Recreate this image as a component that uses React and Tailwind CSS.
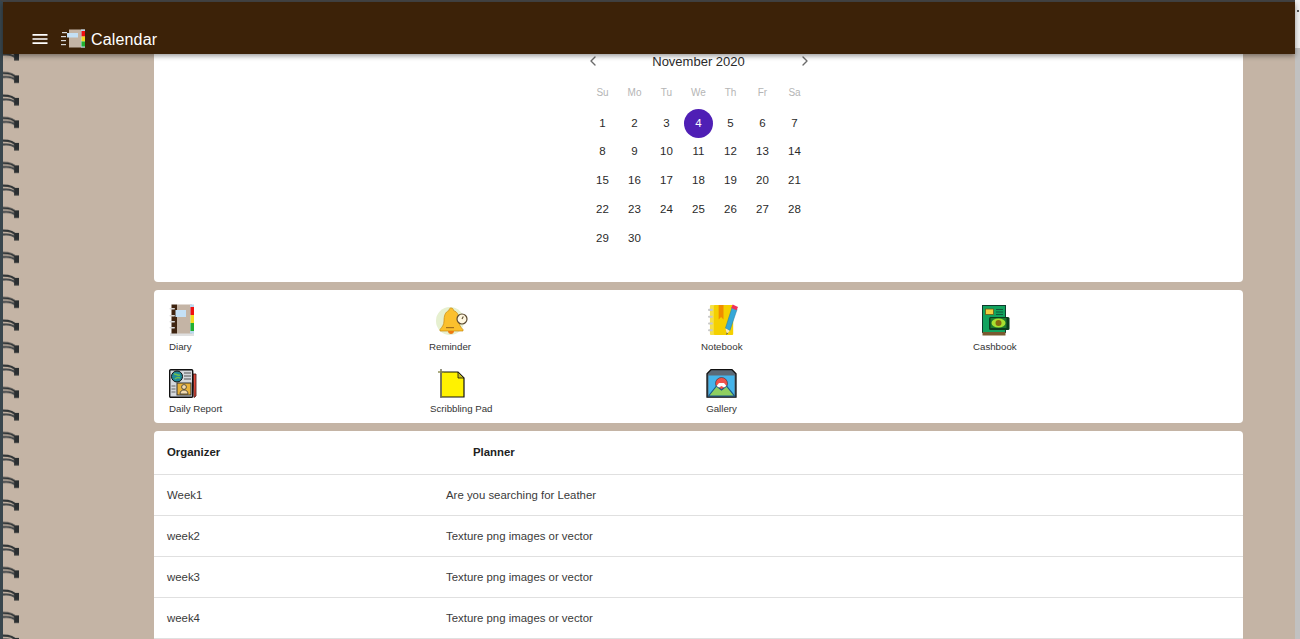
import { ChevronLeft, ChevronRight } from "lucide-react";

const DiaryIcon = ({ className }) => (
  <svg viewBox="0 0 26 32" className={className}>
    <rect x="1" y="29" width="24" height="3" fill="#000" opacity="0.12" />
    <rect x="2.500" y="0.500" width="5.500" height="29" fill="#3f2410" />
    <rect x="8" y="0.500" width="15" height="29" fill="#c4b4a5" />
    <rect x="21" y="0.500" width="4" height="29" fill="#b9d8ee" />
    <rect x="21.500" y="3" width="3.500" height="8" fill="#f01010" />
    <rect x="21.500" y="11" width="3.500" height="8" fill="#f4dc20" />
    <rect x="21.500" y="19" width="3.500" height="8" fill="#22b030" />
    <rect x="6.500" y="6" width="10.500" height="7" fill="#c4e0f6" />
    {[4, 11, 17, 23].map((y) => (
      <rect key={y} x="0.500" y={y} width="5.500" height="1.600" rx="0.800" fill="#d8d8d8" />
    ))}
  </svg>
);

const ReminderIcon = ({ className }) => (
  <svg viewBox="0 0 32 30" className={className}>
    <circle cx="14" cy="15" r="14" fill="#e6f0d0" />
    <path d="M15 2c1.500 0 2.500 1 2.500 2.500C22 6 23 10 23 15c0 4 1.500 6 4 8.500v1.500H4v-1.500C6 21 8 19 8 15c0-5 1-9 5-10.500C13 3 13.800 2 15 2z" fill="#fbc02d" stroke="#c98a10" strokeWidth="0.700" />
    <path d="M12 25h6c0 2-1.300 3-3 3s-3-1-3-3z" fill="#ef7a10" />
    <rect x="10" y="21" width="8" height="1.200" fill="#a3701a" />
    <circle cx="26" cy="13" r="5" fill="#fff7e0" stroke="#5c4a30" strokeWidth="1.200" />
    <path d="M26 13l1.300-2.600" stroke="#5c4a30" strokeWidth="1.100" />
  </svg>
);

const NotebookIcon = ({ className }) => (
  <svg viewBox="0 0 32 33" className={className}>
    <rect x="2" y="1" width="5" height="31" rx="1" fill="#f4e04a" />
    <rect x="6" y="1" width="20" height="31" rx="1" fill="#f4d000" />
    <path d="M11 1h5v15l-2.500-2.500L11 16z" fill="#f08c00" />
    {[5, 12, 19, 26].map((y) => (
      <rect key={y} x="0" y={y} width="5" height="2.200" rx="1" fill="#c8c8c8" />
    ))}
    <path d="M25 3l5 2.500-7.500 22-4.500-2.500z" fill="#35a8d8" stroke="#2a7ea8" strokeWidth="0.600" />
    <path d="M25.500 0.500l5.500 2.500-1.500 3.500-5.500-2.500z" fill="#f0305a" />
    <path d="M18 25l4.500 2.500-3 3.500z" fill="#f4e8c0" />
    <path d="M19.200 29.500l1.300 0.800-1.400 1.700z" fill="#333" />
  </svg>
);

const CashbookIcon = ({ className }) => (
  <svg viewBox="0 0 28 31" className={className}>
    <rect x="0.500" y="0.500" width="23" height="27" fill="#12a35e" stroke="#0f3a2c" />
    <rect x="0.500" y="27" width="23" height="3.500" fill="#7a5a30" />
    <rect x="3.500" y="4" width="8" height="5.500" fill="#f2d040" stroke="#6a5a18" strokeWidth="0.800" />
    <path d="M14 4.500h7M14 7h7M14 9.500h7" stroke="#0f5a3a" strokeWidth="1" />
    <rect x="7" y="12" width="20.500" height="13" rx="1.500" fill="#0b3d1e" />
    <rect x="8.500" y="13" width="16" height="10" fill="#1e7a2e" />
    <ellipse cx="16.500" cy="18" rx="7" ry="4.500" fill="#a8e030" />
    <circle cx="16.500" cy="18" r="3" fill="#8a6a10" />
  </svg>
);

const ReportIcon = ({ className }) => (
  <svg viewBox="0 0 28 29" className={className}>
    <path d="M24 5h3v22l-2 1.500z" fill="#e04a3a" stroke="#401010" strokeWidth="0.800" />
    <rect x="0.700" y="0.700" width="23" height="27.500" rx="1" fill="#d4d8dc" stroke="#111" strokeWidth="1.400" />
    <circle cx="8" cy="7.500" r="5.500" fill="#1f8a9a" stroke="#111" strokeWidth="1" />
    <path d="M5 5c3 0 4 2 6 1M6 10c2-2 3-2 5-1" stroke="#6fbf50" strokeWidth="1.500" fill="none" />
    <path d="M15 4h7M15 7h7M15 10h7" stroke="#555" strokeWidth="1.200" />
    <rect x="8" y="14" width="14" height="12" fill="#e8b23a" stroke="#333" strokeWidth="1" />
    <circle cx="15" cy="18" r="2.400" fill="#f4dcb0" stroke="#333" strokeWidth="0.800" />
    <path d="M11 25c0-3 2-4 4-4s4 1 4 4z" fill="#f4dcb0" stroke="#333" strokeWidth="0.800" />
    <path d="M2.500 17h4M2.500 20h4M2.500 23h4" stroke="#666" strokeWidth="1.200" />
  </svg>
);

const PadIcon = ({ className }) => (
  <svg viewBox="0 0 27 29" className={className}>
    <path d="M3 3h17l6 6v19H3z" fill="#fff200" stroke="#111" strokeWidth="1.200" />
    <path d="M20 3v6h6z" fill="#c8bc20" stroke="#111" strokeWidth="0.800" />
    <path d="M3 0v29" stroke="#7a7a62" strokeWidth="1.600" />
    <path d="M0 3h6" stroke="#8a8a50" strokeWidth="1.400" />
  </svg>
);

const GalleryIcon = ({ className }) => (
  <svg viewBox="0 0 31 29" className={className}>
    <path d="M5 0.700h21l4 4v23.500H1V4.700z" fill="#5a6a78" stroke="#111" strokeWidth="1.300" />
    <rect x="2.500" y="6.500" width="26" height="20.500" fill="#45b4ea" />
    <circle cx="15.500" cy="14.500" r="6" fill="#f0524a" stroke="#333" strokeWidth="0.600" />
    <path d="M2.500 27l8-10 5 4 5-4 8 10z" fill="#8fcf60" stroke="#1a5a8a" strokeWidth="1.200" />
    <path d="M10.500 17l2.500-3h5l2.500 3-2.500 1.500-2.500-1.500-2.500 1.500z" fill="#fff" />
  </svg>
);

const Spiral = () => (
  <svg className="h-full w-[24px]" aria-hidden="true">
    <defs>
      <pattern id="coil" x="0" y="16.500" width="24" height="22.500" patternUnits="userSpaceOnUse">
        <path d="M0 2.500c5 0 11 1 13 5" stroke="#2f3436" strokeWidth="2.200" fill="none" />
        <path d="M0 6.500c5-.5 10 .5 12.500 3" stroke="#3d4245" strokeWidth="2" fill="none" />
        <path d="M11.500 5h4.500v7.500h-5z" fill="#2b2f31" />
      </pattern>
    </defs>
    <rect width="100%" height="100%" fill="url(#coil)" />
  </svg>
);

const weekDays = ["Su", "Mo", "Tu", "We", "Th", "Fr", "Sa"];
const days = Array.from({ length: 30 }, (_, i) => i + 1);

const Calendar = () => (
  <section className="h-[228px] rounded-b bg-white">
    <div className="mx-auto w-[224px]">
      <div className="-mx-[2px] flex h-[15px] items-center justify-between text-[#6b6b6b]">
        <ChevronLeft className="-mt-[2px] h-4 w-4" strokeWidth={2} />
        <span className="text-[13px] leading-[15px] text-[#2b2b2b]">November 2020</span>
        <ChevronRight className="-mt-[2px] h-4 w-4" strokeWidth={2} />
      </div>
      <div className="mt-[18px] grid grid-cols-7 text-center text-[10px] leading-3 text-[#b5b5b5]">
        {weekDays.map((d) => (
          <span key={d}>{d}</span>
        ))}
      </div>
      <div className="mt-[9px] grid grid-cols-7 text-center text-[11.500px] text-[#2a2a2a]">
        {days.map((d) => (
          <div key={d} className={d <= 7 ? "flex h-[29px] items-center justify-center pt-[2px]" : "flex h-[29px] items-center justify-center"}>
            {d === 4 ? (
              <span className="flex h-[29px] w-[29px] flex-none items-center justify-center rounded-full bg-[#4f1fb5] text-white">{d}</span>
            ) : (
              d
            )}
          </div>
        ))}
      </div>
    </div>
  </section>
);

const AppLink = ({ label, children, className = "items-center" }) => (
  <div className={`flex w-fit flex-col ${className}`}>
    <div className="flex h-[32px] items-end">{children}</div>
    <span className="mt-[5px] text-[9.700px] leading-[12px] text-[#333]">{label}</span>
  </div>
);

const rows = [
  ["Week1", "Are you searching for Leather"],
  ["week2", "Texture png images or vector"],
  ["week3", "Texture png images or vector"],
  ["week4", "Texture png images or vector"],
];

export default function App() {
  return (
    <div className="flex h-[639px] w-[1300px] overflow-hidden bg-[#f1f1f1] font-['Liberation_Sans',Arial,sans-serif]">
      <div className="flex h-full w-[1295px] flex-col border-l-[3px] border-t-2 border-l-[#39464d] border-t-[#444]">
        <header className="relative z-10 flex h-[52px] flex-none items-end bg-[#3c2208] pb-[5px] pl-[27px] text-white shadow-[0_2px_5px_rgba(0,0,0,0.4)]">
          <svg viewBox="0 0 24 24" className="h-5 w-5 fill-white">
            <path d="M3 18h18v-2H3v2zm0-5h18v-2H3v2zm0-7v2h18V6H3z" />
          </svg>
          <svg viewBox="0 0 24 20" className="ml-[11px] h-5 w-6">
            <rect x="8" y="0.500" width="16" height="18" fill="#c4b4a5" />
            <rect x="20" y="0.500" width="4" height="18" fill="#b9d8ee" />
            <rect x="20.500" y="2" width="3.500" height="5.500" fill="#f01010" />
            <rect x="20.500" y="7.500" width="3.500" height="5" fill="#f4dc20" />
            <rect x="20.500" y="12.500" width="3.500" height="5" fill="#22b030" />
            <rect x="6" y="4" width="11" height="4.500" fill="#c4e0f6" />
            {[3, 7, 11, 15].map((y) => (
              <rect key={y} x={y === 3 ? 1 : 0} y={y} width="5" height="1.200" fill="#d8d8d8" />
            ))}
          </svg>
          <span className="-mb-[1px] ml-[6px] text-[16px] leading-[20px] tracking-[0.01em]">Calendar</span>
        </header>
        <main className="flex min-h-0 flex-1 bg-[#c4b4a5]">
          <div className="w-[151px] flex-none">
            <Spiral />
          </div>
          <div className="flex w-[1089px] flex-none flex-col gap-2">
            <Calendar />
            <section className="h-[133px] flex-none rounded bg-white pl-[15px] pt-[14px]">
              <div className="grid grid-cols-[260px_272px_272px_1fr] gap-y-[13px]">
                <AppLink label="Diary" className="items-start">
                  <DiaryIcon className="h-[32px] w-[26px]" />
                </AppLink>
                <AppLink label="Reminder">
                  <ReminderIcon className="ml-[3px] h-[30px] w-[32px]" />
                </AppLink>
                <AppLink label="Notebook">
                  <NotebookIcon className="ml-[3px] h-[32px] w-[31px]" />
                </AppLink>
                <AppLink label="Cashbook">
                  <CashbookIcon className="ml-[2px] h-[31px] w-[28px]" />
                </AppLink>
                <AppLink label="Daily Report" className="items-start">
                  <ReportIcon className="h-[29px] w-[28px]" />
                </AppLink>
                <div className="pl-[1px]">
                  <AppLink label="Scribbling Pad" className="items-start">
                    <PadIcon className="ml-[8px] h-[29px] w-[27px]" />
                  </AppLink>
                </div>
                <div className="pl-[5px]">
                  <AppLink label="Gallery">
                    <GalleryIcon className="h-[29px] w-[31px]" />
                  </AppLink>
                </div>
              </div>
            </section>
            <section className="flex-none rounded-t bg-white text-[11.400px] text-[#3a3a3a]">
              <div className="flex h-[44px] items-center border-b border-[#e0e0e0] pl-[13px] font-bold text-[#222]">
                <span className="w-[279px]">Organizer</span>
                <span className="pl-[27px]">Planner</span>
              </div>
              {rows.map(([week, text]) => (
                <div key={week} className="flex h-[41px] items-center border-b border-[#e0e0e0] pl-[13px] pt-[1px]">
                  <span className="w-[279px]">{week}</span>
                  <span>{text}</span>
                </div>
              ))}
            </section>
          </div>
          <div className="flex-1" />
        </main>
      </div>
      <div className="relative flex-1 bg-[#f1f1f1]">
        <div className="absolute bottom-0 left-0 right-0 top-[48px] bg-[#c1c1c1]" />
        <div className="absolute left-[2px] top-[10px] h-[2px] w-[2px] bg-[#555]" />
      </div>
    </div>
  );
}
